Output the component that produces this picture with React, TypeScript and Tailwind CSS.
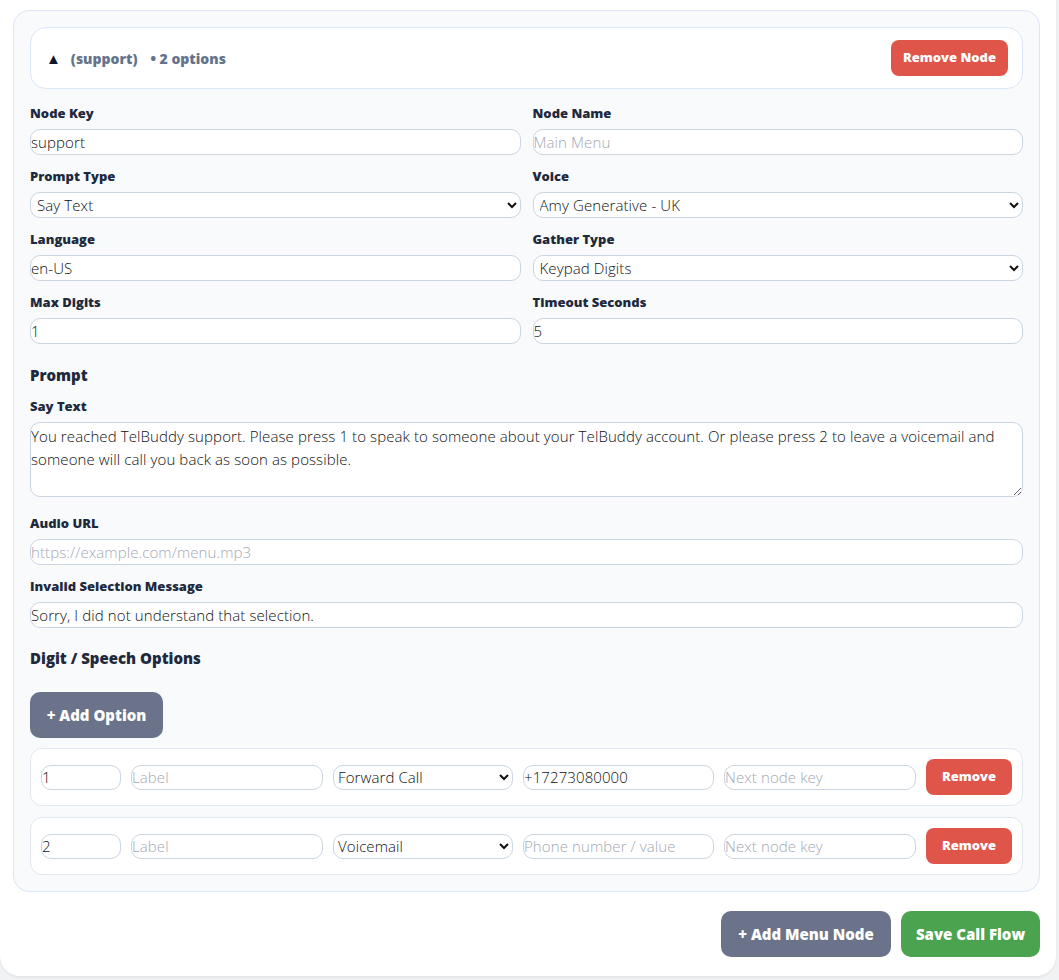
import { useState } from "react";

type Option = { digit: string; label: string; action: string; value: string; next: string };

const INITIAL_OPTIONS: Option[] = [
    { digit: '1', label: '', action: 'forward', value: '+17273080000', next: '' },
    { digit: '2', label: '', action: 'voicemail', value: '', next: '' },
];

const PROMPT = 'You reached TelBuddy support. Please press 1 to speak to someone about your TelBuddy account. Or please press 2 to leave a voicemail and someone will call you back as soon as possible.';

const inputCls = "w-full h-[26px] px-0 bg-white border border-[#cbd5e1] rounded-[10px] text-[15px] font-light tracking-[0.1px] text-[#111] placeholder:text-[#a3a9b5] outline-none font-['Open_Sans',sans-serif]";
const selectCls = "w-full h-[26px] pl-[2px] pr-1 bg-white border border-[#cbd5e1] rounded-[10px] text-[15px] font-light tracking-[0.1px] text-[#111] outline-none font-['Open_Sans',sans-serif]";

function Label({ children }: { children: React.ReactNode }) {
    return <label className="block h-[18px] mb-[7px] text-[13px] leading-[18px] font-extrabold text-[#1e293b]">{children}</label>;
}

export default function App() {
    const [options, setOptions] = useState(INITIAL_OPTIONS);

    return (
        <div className="min-h-screen bg-[#f0f2f4] font-['Open_Sans',sans-serif]">
            <div className="w-[1056px] bg-white rounded-b-[20px] shadow-[0_1px_3px_rgba(0,0,0,0.08)] pl-[13px] pr-4 pt-[10px] pb-[19px]">
                <div className="border border-[#dbe6f8] bg-[#f8fafc] rounded-2xl p-4">
                    {/* header */}
                    <div className="h-[62px] flex items-center justify-between bg-white border border-[#dbe6f8] rounded-2xl pl-[15px] pr-[14px]">
                        <div className="flex items-center text-[14px] font-extrabold text-[#64748b]">
                            <span className="text-[#0f172a] text-[15px] mr-[10px]">▲</span>
                            <span>(support)</span>
                            <span className="ml-[13px]">• 2 options</span>
                        </div>
                        <button className="w-[117px] h-[36px] rounded-lg bg-[#e0554a] text-white text-[13px] font-extrabold">Remove Node</button>
                    </div>

                    <div className="grid grid-cols-2 gap-x-3 gap-y-3 mt-[15px]">
                        <div>
                            <Label>Node Key</Label>
                            <input className={inputCls} defaultValue="support" />
                        </div>
                        <div>
                            <Label>Node Name</Label>
                            <input className={inputCls} placeholder="Main Menu" />
                        </div>
                        <div>
                            <Label>Prompt Type</Label>
                            <select className={selectCls} defaultValue="say">
                                <option value="say">Say Text</option>
                                <option value="audio">Play Audio</option>
                            </select>
                        </div>
                        <div>
                            <Label>Voice</Label>
                            <select className={selectCls} defaultValue="amy">
                                <option value="amy">Amy Generative - UK</option>
                                <option value="joanna">Joanna Generative - US</option>
                            </select>
                        </div>
                        <div>
                            <Label>Language</Label>
                            <input className={inputCls} defaultValue="en-US" />
                        </div>
                        <div>
                            <Label>Gather Type</Label>
                            <select className={selectCls} defaultValue="dtmf">
                                <option value="dtmf">Keypad Digits</option>
                                <option value="speech">Speech</option>
                            </select>
                        </div>
                        <div>
                            <Label>Max Digits</Label>
                            <input className={inputCls} defaultValue="1" />
                        </div>
                        <div>
                            <Label>Timeout Seconds</Label>
                            <input className={inputCls} defaultValue="5" />
                        </div>
                    </div>

                    <h3 className="mt-[21px] h-[20px] text-[15px] leading-[20px] font-extrabold text-[#1e293b]">Prompt</h3>
                    <div className="mt-3">
                        <Label>Say Text</Label>
                        <textarea
                            className="block w-full h-[75px] px-0 pt-[2px] bg-white border border-[#cbd5e1] rounded-[10px] text-[15px] font-light tracking-[0.1px] leading-[23px] text-[#111] outline-none font-['Open_Sans',sans-serif]"
                            defaultValue={PROMPT}
                        />
                    </div>
                    <div className="mt-[17px]">
                        <Label>Audio URL</Label>
                        <input className={inputCls} placeholder="https://example.com/menu.mp3" />
                    </div>
                    <div className="mt-3">
                        <Label>Invalid Selection Message</Label>
                        <input className={inputCls} defaultValue="Sorry, I did not understand that selection." />
                    </div>

                    <h3 className="mt-5 h-[20px] text-[15px] leading-[20px] font-extrabold text-[#1e293b]">Digit / Speech Options</h3>
                    <button
                        onClick={() => setOptions(prev => [...prev, { digit: '', label: '', action: 'forward', value: '', next: '' }])}
                        className="mt-6 w-[133px] h-[46px] rounded-[10px] bg-[#6a7389] text-white text-[15px] font-extrabold"
                    >
                        + Add Option
                    </button>

                    <div className="mt-[10px] flex flex-col gap-[11px]">
                        {options.map((opt, i) => (
                            <div key={i} className="flex items-center gap-2.5 bg-white border border-[#e2e8f0] rounded-xl px-2.5 py-[10px]">
                                <input className={inputCls + " !w-[80px] !h-[25px] shrink-0"} defaultValue={opt.digit} />
                                <input className={inputCls + " !w-[192px] !h-[25px] shrink-0"} placeholder="Label" />
                                <select className={selectCls + " !w-[180px] !h-[25px] shrink-0 !pl-0"} defaultValue={opt.action}>
                                    <option value="forward">Forward Call</option>
                                    <option value="voicemail">Voicemail</option>
                                    <option value="goto">Go To Node</option>
                                </select>
                                <input className={inputCls + " !w-[191px] !h-[25px] shrink-0"} defaultValue={opt.value} placeholder="Phone number / value" />
                                <input className={inputCls + " !w-[192px] !h-[25px] shrink-0"} placeholder="Next node key" />
                                <button
                                    onClick={() => setOptions(prev => prev.filter((_, j) => j !== i))}
                                    className="w-[86px] h-[36px] shrink-0 rounded-lg bg-[#e0554a] text-white text-[13px] font-extrabold"
                                >
                                    Remove
                                </button>
                            </div>
                        ))}
                    </div>
                </div>

                <div className="mt-[19px] flex justify-end gap-2.5">
                    <button className="w-[170px] h-[46px] rounded-[10px] bg-[#6a7389] text-white text-[15px] font-extrabold">+ Add Menu Node</button>
                    <button className="w-[139px] h-[46px] rounded-[10px] bg-[#4ba34f] text-white text-[15px] font-extrabold">Save Call Flow</button>
                </div>
            </div>
        </div>
    );
}
